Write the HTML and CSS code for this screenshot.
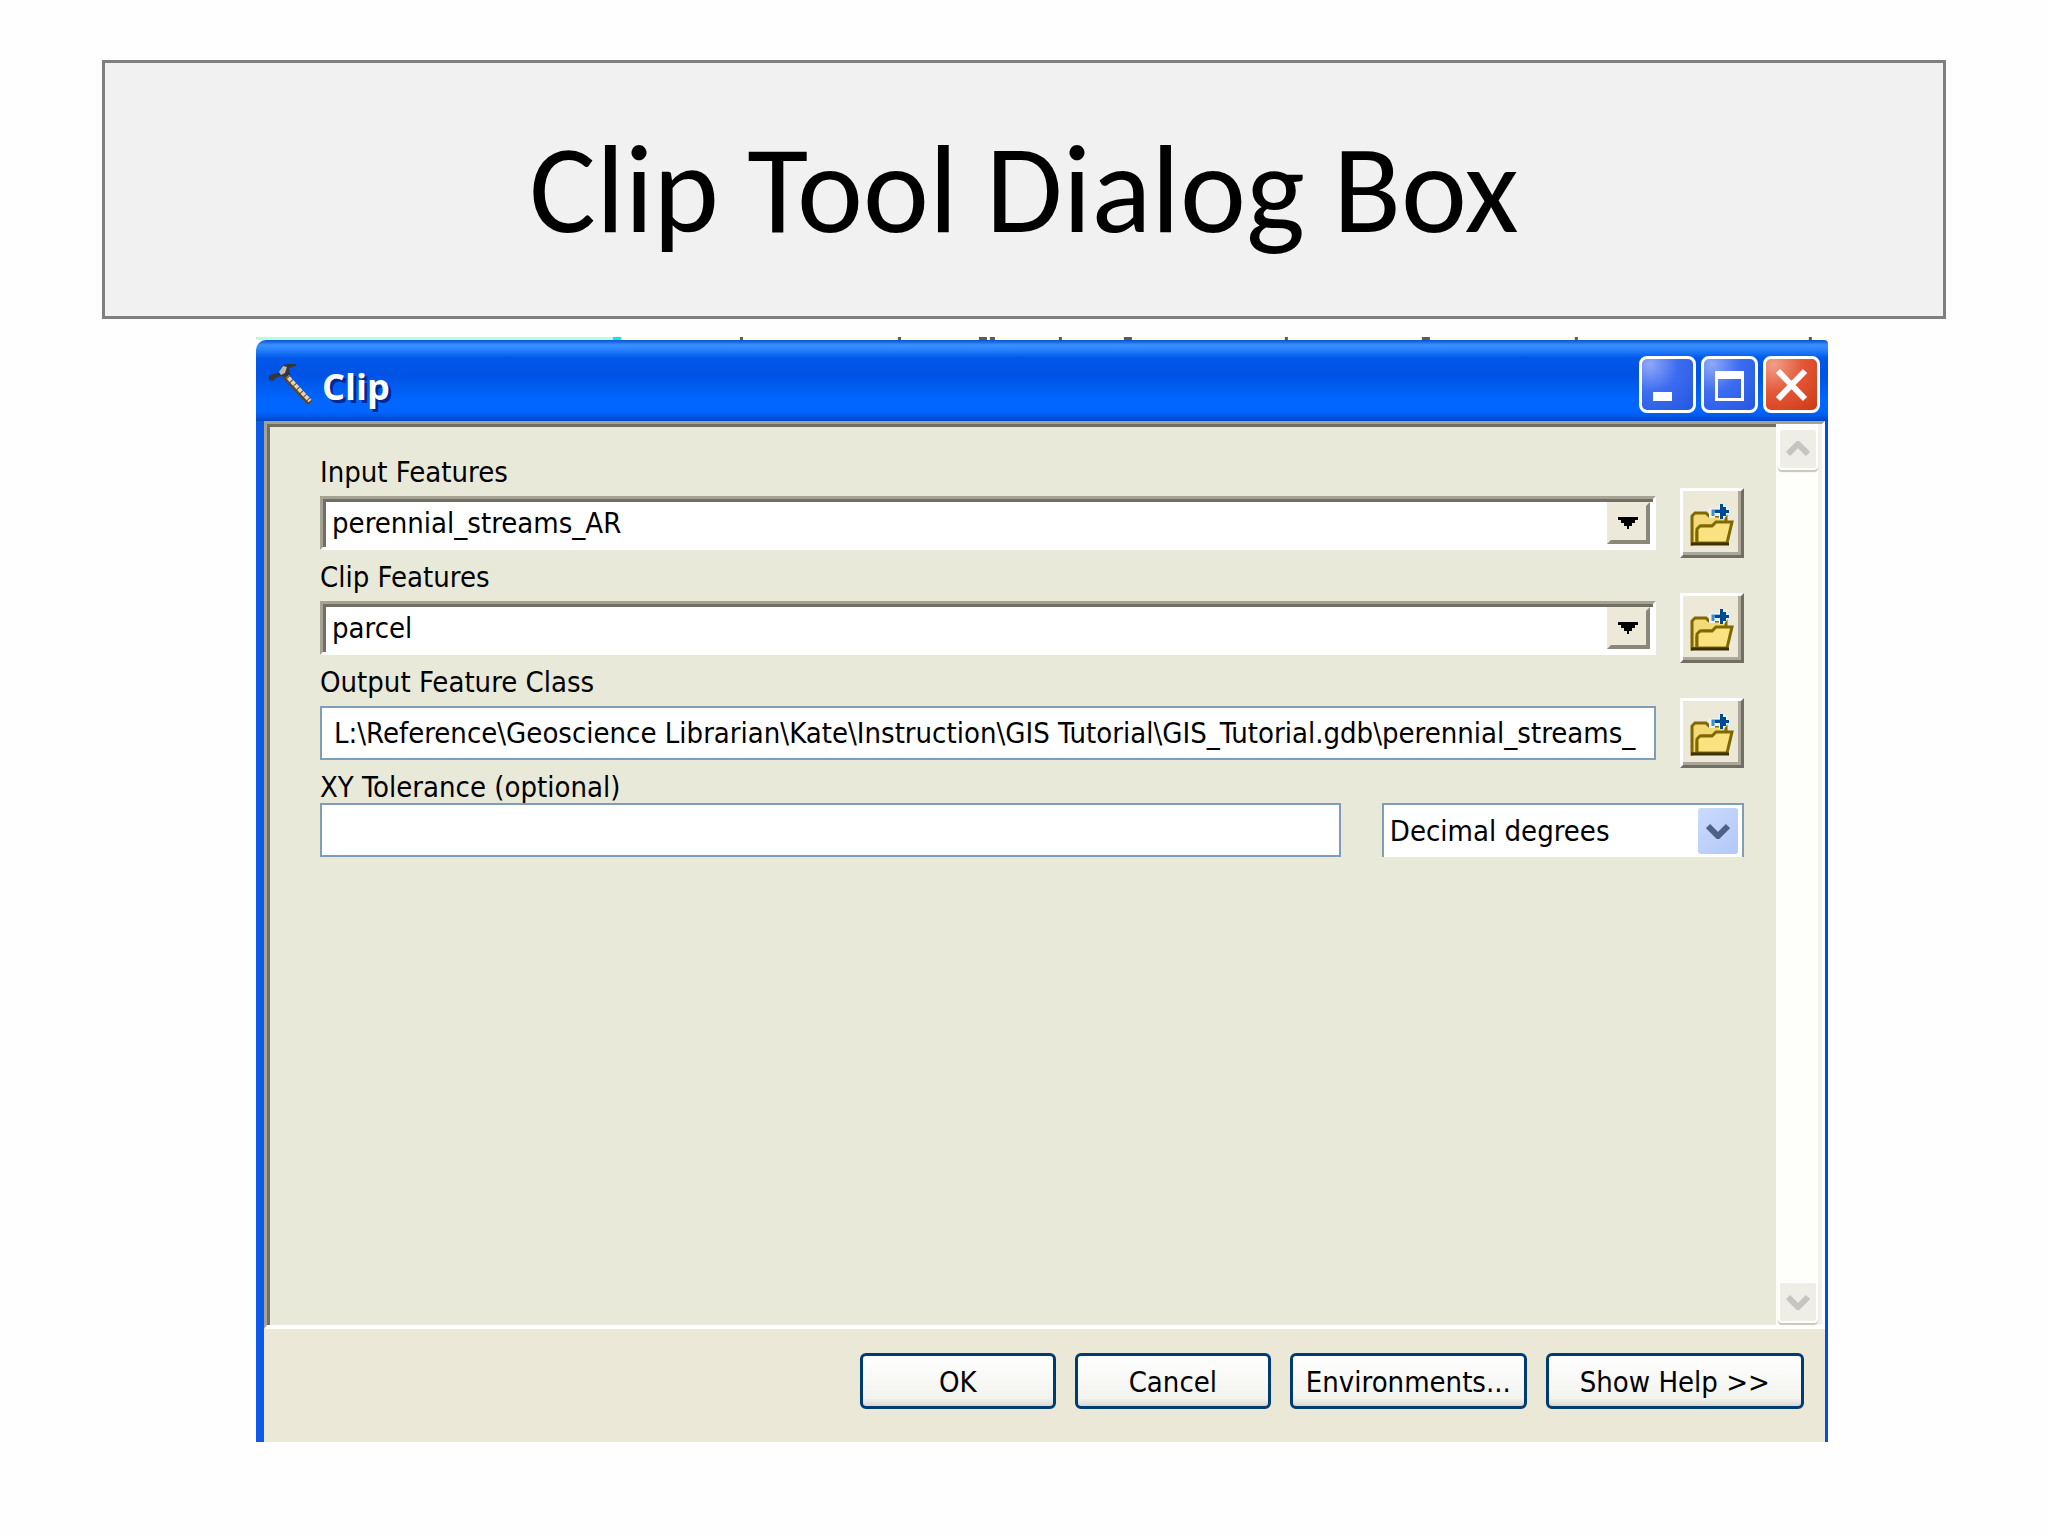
FILE: index.html
```html
<!DOCTYPE html>
<html lang="en">
<head>
    <meta charset="UTF-8">
    <meta name="viewport" content="width=device-width, initial-scale=1.0">
    <title>Clip Tool Dialog Box</title>
    <link rel="stylesheet" href="styles.css">
</head>
<body>
    <!-- Icons shared by several buttons -->
    <svg class="sprite" aria-hidden="true">
        <symbol id="folder" viewBox="0 0 44 42">
            <path d="M2 40V12l3-3h11l3 3h17v10H12L7 28v11z" fill="#f3d978" stroke="#806800" stroke-width="3"/>
            <path d="M7 39V25l3-3h12l4-4h16l-5 21z" fill="#fbe281" stroke="#806800" stroke-width="3"/>
            <path d="M1 40h38" stroke="#3d3000" stroke-width="3"/>
            <path d="M19 14V4h10V0h5l6 7-6 8h-5v-3h-4v2z" fill="#e9f3f8"/>
            <path d="M23 12V7h8" fill="none" stroke="#3f8fd0" stroke-width="3"/>
            <path d="M25 6h5V0h3v3h3v3h3v3h-3v3h-3v3h-3V9h-5z" fill="#004a92"/>
        </symbol>
        <symbol id="chevron" viewBox="0 0 24 16">
            <path d="M2 3l10 10L22 3" fill="none" stroke="currentColor" stroke-width="6"/>
        </symbol>
    </svg>

    <header class="slide-title">
        <h1>Clip Tool Dialog Box</h1>
    </header>

    <main class="capture">
        <!-- Sliver of the window behind the dialog -->
        <svg class="behind" viewBox="0 0 1572 3" preserveAspectRatio="none" aria-hidden="true">
            <path d="M0 0h357v3H0z" fill="#b5ffe0"/>
            <path d="M357 0h8v3h-8z" fill="#00e8ff"/>
            <path d="M365 0h1207v3H365z" fill="#fbffd6"/>
            <path d="M484 0h3v3h-3zM642 0h3v3h-3zM723 0h8v3h-8zM734 0h5v3h-5zM803 0h3v3h-3zM868 0h8v3h-8zM1029 0h3v3h-3zM1166 0h8v3h-8zM1319 0h3v3h-3zM1553 0h3v3h-3z" fill="#5c5c52"/>
        </svg>
        <div class="window">
            <div class="titlebar">
                <svg class="hammer" viewBox="0 0 44 44" aria-hidden="true">
                    <path d="M15 12L41 40" stroke="#5a4630" stroke-width="6"/>
                    <path d="M16 11L41 38" stroke="#e6d3ae" stroke-width="4" stroke-dasharray="4 1"/>
                    <path d="M0 13l4-2 6-1 3-7 5-2h9v2l-7 2 1 6-4 4-4-2-5 1-4 4-4-1z" fill="#34363a"/>
                    <path d="M10 9l4-6 4 1-2 6-4 2z" fill="#b9b9b4"/>
                </svg>
                <h2>Clip</h2>
                <button class="win-btn" type="button" aria-label="Minimize">
                    <svg viewBox="0 0 51 51"><path d="M11 33h19v9H11z" fill="#fff"/></svg>
                </button>
                <button class="win-btn" type="button" aria-label="Maximize">
                    <svg viewBox="0 0 51 51"><path d="M11 12h29v30H11zM14 20v19h23V20z" fill="#fff" fill-rule="evenodd"/></svg>
                </button>
                <button class="win-btn close" type="button" aria-label="Close">
                    <svg viewBox="0 0 51 51"><path d="M12 12l27 28M39 12L12 40" stroke="#fff" stroke-width="6"/></svg>
                </button>
            </div>

            <form class="dialog">
                <div class="panel">
                    <div class="fields">
                        <label for="inputFeatures">Input Features</label>
                        <div class="row">
                            <div class="combo">
                                <select id="inputFeatures"><option>perennial_streams_AR</option></select>
                                <span class="combo-arrow"><svg viewBox="0 0 20 12"><path d="M0 0h20v3h-3v3h-3v3h-3v3H9V9H6V6H3V3H0z"/></svg></span>
                            </div>
                            <button class="browse" type="button" aria-label="Browse input features"><svg><use href="#folder"/></svg></button>
                        </div>

                        <label for="clipFeatures">Clip Features</label>
                        <div class="row">
                            <div class="combo">
                                <select id="clipFeatures"><option>parcel</option></select>
                                <span class="combo-arrow"><svg viewBox="0 0 20 12"><path d="M0 0h20v3h-3v3h-3v3h-3v3H9V9H6V6H3V3H0z"/></svg></span>
                            </div>
                            <button class="browse" type="button" aria-label="Browse clip features"><svg><use href="#folder"/></svg></button>
                        </div>

                        <label for="outputClass">Output Feature Class</label>
                        <div class="row">
                            <input id="outputClass" type="text" value="L:\Reference\Geoscience Librarian\Kate\Instruction\GIS Tutorial\GIS_Tutorial.gdb\perennial_streams_">
                            <button class="browse" type="button" aria-label="Browse output feature class"><svg><use href="#folder"/></svg></button>
                        </div>

                        <label for="tolerance">XY Tolerance (optional)</label>
                        <div class="row tolerance">
                            <input id="tolerance" type="text">
                            <div class="units">
                                <select aria-label="Tolerance units"><option>Decimal degrees</option></select>
                                <span class="units-arrow"><svg><use href="#chevron"/></svg></span>
                            </div>
                        </div>
                    </div>

                    <div class="scrollbar">
                        <button class="scroll-btn up" type="button" aria-label="Scroll up"><svg><use href="#chevron"/></svg></button>
                        <button class="scroll-btn" type="button" aria-label="Scroll down"><svg><use href="#chevron"/></svg></button>
                    </div>
                </div>

                <div class="actions">
                    <button type="button">OK</button>
                    <button type="button">Cancel</button>
                    <button class="wide" type="button">Environments...</button>
                    <button class="wider" type="button">Show Help &gt;&gt;</button>
                </div>
            </form>
        </div>
    </main>
</body>
</html>
```
FILE: styles.css
```css
* {
    box-sizing: border-box;
}

body {
    margin: 0;
    padding: 60px 0 94px;
    min-height: 100vh;
    display: flex;
    flex-direction: column;
    background: #fefefe;
    color: #000;
    font-family: "DejaVu Sans Condensed", "DejaVu Sans", sans-serif;
    font-size: 29px;
}

button, input, select {
    font: inherit;
    color: inherit;
    margin: 0;
    padding: 0;
    border: 0;
    border-radius: 0;
    appearance: none;
    outline: none;
}

svg {
    display: block;
}

.sprite {
    position: absolute;
    width: 0;
    height: 0;
}

/* Slide heading */
.slide-title {
    display: flex;
    justify-content: center;
    align-items: center;
    height: 259px;
    margin: 0 5%;
    border: 3px solid #7f7f7f;
    background: #f1f1f1;
}

h1 {
    margin: 0;
    font-family: Carlito, Lato, sans-serif;
    font-size: 125px;
    font-weight: 400;
    line-height: 144px;
}

/* Screen capture */
.capture {
    flex: 1;
    display: flex;
    flex-direction: column;
    width: 76.75%;
    margin: 18px 0 0 12.5%;
}

.behind {
    width: 100%;
    height: 3px;
}

.window {
    flex: 1;
    display: flex;
    flex-direction: column;
}

.titlebar {
    display: flex;
    align-items: center;
    gap: 5px;
    height: 81px;
    padding: 8px 8px 0 13px;
    border-radius: 10px 4px 0 0;
    background: linear-gradient(#0a50d0 0, #3a90ff 5px, #2b86ff 9px, #0058ea 18px, #0053e4 35px, #0066ff 60px, #0066ff 72px, #0046cc 81px);
}

.hammer {
    width: 44px;
    height: 44px;
}

h2 {
    flex: 1;
    margin: 0;
    padding: 4px 0 0 4px;
    color: #fff;
    font-family: "Open Sans", sans-serif;
    font-size: 36px;
    font-weight: 700;
    text-shadow: 3px 3px 0 #002a90;
}

.win-btn {
    width: 57px;
    height: 57px;
    border: 3px solid #fff;
    border-radius: 8px;
    background: radial-gradient(circle at 15% 10%, #8fa8f8, #3c6cf0 45%, #2456e0);
}

.win-btn.close {
    background: radial-gradient(circle at 15% 10%, #f0a088, #e4573a 45%, #cc3a10);
}

.dialog {
    flex: 1;
    display: flex;
    flex-direction: column;
    border-left: 8px solid #0c5be8;
    border-right: 3px solid #0050e8;
    background: #ebe8d8;
}

.panel {
    flex: 1;
    display: flex;
    border: 3px solid #a5a293;
    border-right-color: #fff;
    border-bottom: 4px solid #fff;
    background: #e9e9d9;
    box-shadow: inset 3px 3px 0 #716f64;
}

.fields {
    flex: 1;
    min-width: 0;
    padding: 29px 32px 20px 53px;
}

label {
    display: block;
    height: 35px;
    padding-top: 3px;
    line-height: 32px;
}

.row {
    display: flex;
    align-items: center;
    gap: 24px;
    height: 70px;
}

.row.tolerance {
    height: 54px;
    gap: 41px;
}

.combo {
    flex: 1;
    display: flex;
    height: 54px;
    padding: 3px;
    border: 3px solid;
    border-color: #a5a293 #fff #fff #a5a293;
    background: #fff;
    box-shadow: inset 3px 3px 0 #716f64;
}

.combo select {
    flex: 1;
    min-width: 0;
    padding-left: 6px;
    background: none;
}

.combo-arrow {
    display: flex;
    justify-content: center;
    align-items: center;
    width: 43px;
    border: 4px solid;
    border-color: #ece9d8 #8a887a #8a887a #ece9d8;
    background: #ece9d8;
}

.combo-arrow svg {
    width: 20px;
    height: 12px;
}

.browse {
    display: flex;
    justify-content: center;
    align-items: center;
    width: 64px;
    height: 70px;
    padding-top: 3px;
    border: 3px solid;
    border-color: #fff #716f64 #716f64 #fff;
    background: #ece9d8;
    box-shadow: inset -3px -3px 0 #aca899;
}

.browse svg {
    width: 44px;
    height: 42px;
}

input {
    flex: 1;
    min-width: 0;
    height: 54px;
    padding: 0 14px 0 12px;
    border: 2px solid #7f9db9;
    background: #fff;
}

.units {
    display: flex;
    align-items: center;
    width: 362px;
    height: 54px;
    padding: 0 4px 0 6px;
    border: 2px solid #7f9db9;
    border-bottom: 0;
    background: #fff;
}

.units select {
    flex: 1;
    min-width: 0;
    background: none;
}

.units-arrow {
    display: flex;
    justify-content: center;
    align-items: center;
    width: 40px;
    height: 46px;
    border-radius: 3px;
    background: linear-gradient(135deg, #cbdafc, #b3c8f8);
    color: #4d6185;
}

.units-arrow svg, .scroll-btn svg {
    width: 24px;
    height: 16px;
}

.scrollbar {
    display: flex;
    flex-direction: column;
    justify-content: space-between;
    width: 46px;
    padding: 4px 4px 2px 2px;
    border-right: 4px solid #f3f1e8;
    background: #fefefb;
}

.scroll-btn {
    display: flex;
    justify-content: center;
    align-items: center;
    width: 40px;
    height: 42px;
    border: 2px solid #fff;
    border-radius: 4px;
    background: #eeede6;
    box-shadow: 0 2px 1px #c9c7ba;
    color: #c6c5bf;
}

.scroll-btn.up svg {
    transform: rotate(180deg);
}

.actions {
    display: flex;
    justify-content: flex-end;
    gap: 19px;
    padding: 24px 21px 33px;
}

.actions button {
    width: 196px;
    height: 56px;
    padding-top: 2px;
    border: 3px solid #003c74;
    border-radius: 6px;
    background: linear-gradient(#fff, #f2f2ee 85%, #dcd8d0);
}

.actions .wide {
    width: 237px;
}

.actions .wider {
    width: 258px;
}
```
